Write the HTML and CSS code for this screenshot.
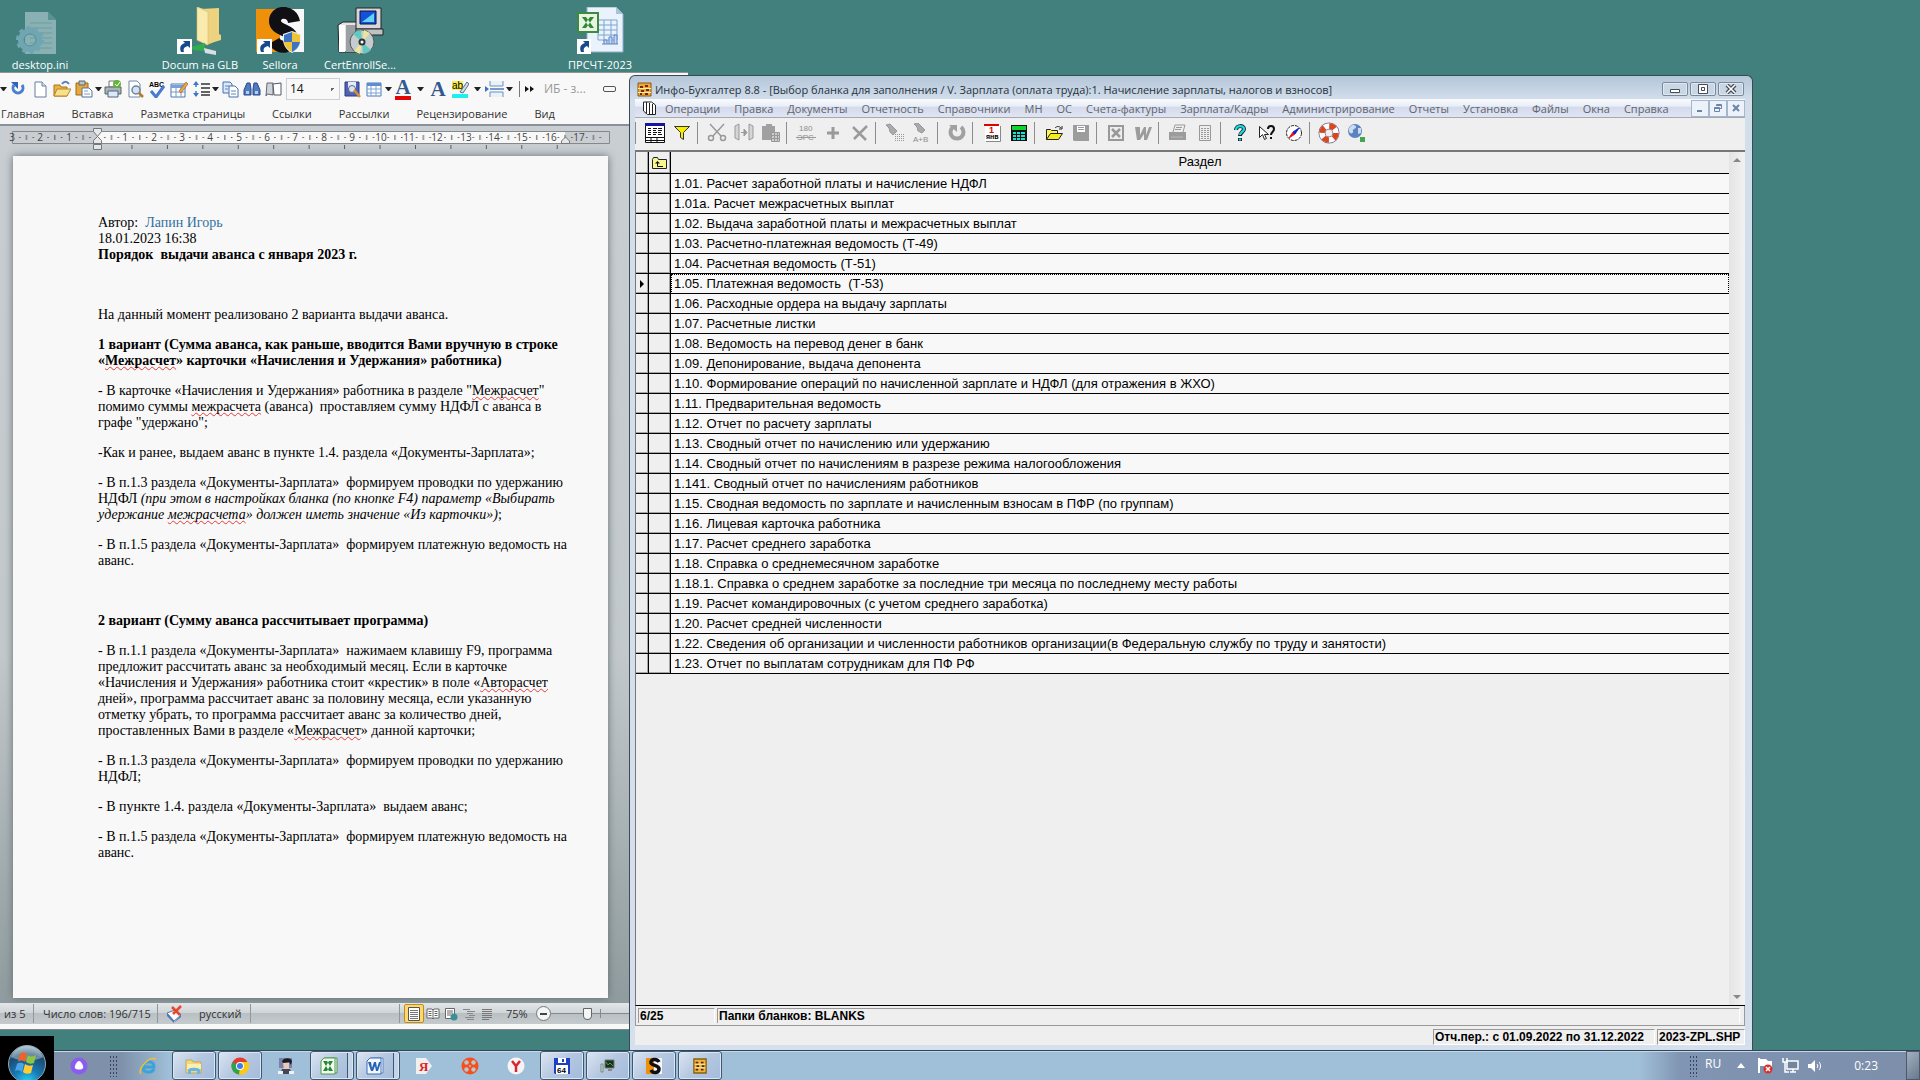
FILE: index.html
```html
<!DOCTYPE html>
<html lang="ru">
<head>
    <meta charset="UTF-8">
    <meta name="viewport" content="width=device-width, initial-scale=1.0">
    <title>Инфо-Бухгалтер 8.8</title>
    <link rel="stylesheet" href="styles.css">
</head>
<body>
    <main class="desktop">
        <!-- Desktop shortcuts -->
        <div class="shortcuts">
            <a class="shortcut col-1" href="#">
                <svg width="48" height="48" viewBox="0 0 48 48"><g opacity=".6"><path d="M9 5h23l8 8v34H9z" fill="#b9d0d6"/><path d="M32 5v8h8z" fill="#6d9da0"/><path d="M14 16h22M14 21h22M14 26h22M14 31h22M14 36h22M14 41h22" stroke="#8fb2b8"/><circle cx="14" cy="33" r="9" fill="none" stroke="#8fc0d4" stroke-width="6"/><circle cx="14" cy="33" r="12" fill="none" stroke="#8fc0d4" stroke-width="4" stroke-dasharray="4 3.5"/><circle cx="14" cy="33" r="6" fill="none" stroke="#5c98a8"/></g></svg>
                <span>desktop.ini</span>
            </a>
            <a class="shortcut col-3" href="#">
                <svg width="48" height="48" viewBox="0 0 48 48"><path d="M21 0l10 3v35l-10-5z" fill="#f5e39a"/><path d="M31 5l12-3v31l-12 5z" fill="#e5c669"/><path d="M25 2l18-1v26l2 1v5l-14 4V6z" fill="#edd280"/><path d="M21 0l11 5v33l-11-5z" fill="#f9ebae" stroke="#d9bd67" stroke-width=".6"/><path d="M15 40l14-4v8l-12-1z" fill="#2fae4d"/><path d="M28 41l12 3v4l-11-2z" fill="#d8e0e2"/><path d="M1 32h15v15H1z" fill="#fff"/><path d="M5 45c-2-5 0-8 4-9l-2-2h7v7l-2-2c-4 1-5 3-4 6z" fill="#164a8c"/></svg>
                <span>Docum на GLB</span>
            </a>
            <a class="shortcut col-4" href="#">
                <svg width="48" height="48" viewBox="0 0 48 48"><path d="M0 2h26v43H0z" fill="#ee9009"/><path d="M24 2h24v43H24z" fill="#f7f7f7"/><path d="M38 15c-2-12-19-12-19-1 0 10 17 8 17 18 0 9-13 11-18 2" fill="none" stroke="#101014" stroke-width="12"/><path d="M27 27l9-3 9 3c1 11-3 16-9 19-6-3-10-8-9-19z" fill="#e9eff5"/><path d="M36 25l-8 3v7h8zM36 35h8c-1 5-4 8-8 10z" fill="#3d73c3"/><path d="M36 25l8 3v7h-8zM36 35h-8c1 5 4 8 8 10z" fill="#f1c437"/><path d="M1 32h15v15H1z" fill="#fff"/><path d="M5 45c-2-5 0-8 4-9l-2-2h7v7l-2-2c-4 1-5 3-4 6z" fill="#164a8c"/></svg>
                <span>Sellora</span>
            </a>
            <a class="shortcut col-5" href="#">
                <svg width="48" height="48" viewBox="0 0 48 48"><path d="M2 18l5-3h14v30H3z" fill="#e4e4e4" stroke="#222"/><path d="M3 18h6v27H3z" fill="#fff"/><path d="M10 18h11v27H10z" fill="#9aa0a4"/><path d="M20 1h25v21H20z" fill="#d5d7da" stroke="#222"/><path d="M24 4h16v13H24z" fill="#1551d8" stroke="#113" /><path d="M26 15L38 6v9z" fill="#5fd4f5"/><path d="M20 22h27v6H20z" fill="#bfc2c5" stroke="#222"/><circle cx="26" cy="35" r="12" fill="#c5cccf" stroke="#555"/><path d="M26 35L17 27a12 12 0 0 1 8-4zM26 35l9 8a12 12 0 0 1-8 4z" fill="#61c9c0"/><path d="M26 35l2-12 6 3zM26 35l-2 12-6-3z" fill="#e9e69c"/><circle cx="26" cy="35" r="3.5" fill="#333"/><circle cx="26" cy="35" r="1.5" fill="#fff"/></svg>
                <span>CertEnrollSe...</span>
            </a>
            <a class="shortcut col-8" href="#">
                <svg width="48" height="48" viewBox="0 0 48 48"><path d="M11 0h29l7 7v38H11z" fill="#eaf3fc" stroke="#8daecb"/><path d="M40 0v7h7z" fill="#a8c4dd"/><path d="M22 13h19M22 18h19M22 23h19M22 28h19M22 33h19M22 13v20M28 13v22M35 13v20M41 13v20" stroke="#7da4d1"/><path d="M26 37h16M28 37v-4h3v4M33 37v-7h3v7M38 37v-9h3v9" stroke="#5b83c5" fill="#c6d8f0"/><path d="M2 6h20v19H2z" fill="#e8f3e4" stroke="#3d8b43" stroke-width="2"/><path d="M6 10h4l8 11h-4zM18 10h-4L6 21h4z" fill="#2f8a36"/><path d="M1 32h14v15H1z" fill="#fff"/><path d="M5 45c-2-5 0-8 4-9l-2-2h6v7l-2-2c-3 1-4 3-3 6z" fill="#164a8c"/></svg>
                <span>ПРСЧТ-2023</span>
            </a>
        </div>

        <!-- Text editor window -->
        <section class="word">
            <div class="word-tools">
                <i class="caret"></i>
                <button class="tool" aria-label="Отменить"><svg width="18" height="18" viewBox="0 0 18 18"><path d="M5 5a5 5 0 1 0 8 0" fill="none" stroke="#4a80cf" stroke-width="3"/><path d="M2 2h7v7z" fill="#2f62b8"/></svg></button>
                <button class="tool" aria-label="Создать"><svg width="18" height="18" viewBox="0 0 18 18"><path d="M4 2h7l4 4v11H4z" fill="#fff" stroke="#667da0"/><path d="M11 2v4h4" fill="#dce6f4" stroke="#667da0"/></svg></button>
                <button class="tool" aria-label="Открыть"><svg width="18" height="18" viewBox="0 0 18 18"><path d="M1 5h6l1 2h6v9H1z" fill="#e9b54a" stroke="#a67417"/><path d="M4 9h14l-4 7H1z" fill="#fbe08c" stroke="#b3862a"/><path d="M9 4c2-3 5-3 7 0" fill="none" stroke="#5d83b8" stroke-width="2"/></svg></button>
                <button class="tool" aria-label="Вставить"><svg width="18" height="18" viewBox="0 0 18 18"><path d="M1 3h12v12H1z" fill="#e8a93a" stroke="#9b6a18"/><path d="M4 1h6v4H4z" fill="#b9c2cd" stroke="#666"/><path d="M7 8h7l3 3v6H7z" fill="#fff" stroke="#51719d"/><path d="M9 11h4M9 14h6" stroke="#7f9bc5"/></svg></button>
                <i class="caret"></i>
                <button class="tool" aria-label="Печать"><svg width="18" height="18" viewBox="0 0 18 18"><path d="M5 1h8v6H5z" fill="#fff" stroke="#777"/><path d="M1 7h16v7H1z" fill="#aab4bd" stroke="#566"/><path d="M4 11h10v6H4z" fill="#dbeafa" stroke="#567"/><circle cx="13" cy="4" r="4" fill="#65b33d"/><path d="M11 4l2 2 3-4" stroke="#fff" fill="none"/></svg></button>
                <button class="tool" aria-label="Просмотр"><svg width="18" height="18" viewBox="0 0 18 18"><path d="M3 1h8l3 3v13H3z" fill="#fff" stroke="#7186a6"/><circle cx="10" cy="10" r="4" fill="#cfe5f7" stroke="#708196" stroke-width="1.5"/><path d="M13 13l4 4" stroke="#b67a2a" stroke-width="2.5"/></svg></button>
                <button class="tool" aria-label="Правописание"><svg width="22" height="18" viewBox="0 0 22 18"><text x="3" y="7" class="tiny-text">ABC</text><path d="M5 11l5 6 8-11" fill="none" stroke="#477ad0" stroke-width="3"/></svg></button>
                <button class="tool" aria-label="Нарисовать таблицу"><svg width="18" height="18" viewBox="0 0 18 18"><path d="M1 4h14v13H1z" fill="#fff" stroke="#4f78b4"/><path d="M1 5h14v3H1z" fill="#79a0d8"/><path d="M1 12h14M6 8v9M11 8v9" stroke="#7799c8"/><path d="M9 11L16 2l2 2-7 9z" fill="#eaa44b" stroke="#8d5520" stroke-width=".6"/></svg></button>
                <button class="tool" aria-label="Интервал"><svg width="18" height="18" viewBox="0 0 18 18"><path d="M4 2v5M4 11v5" stroke="#3d78c9"  stroke-width="1.5"/><path d="M1 5l3-4 3 4zM1 13l3 4 3-4z" fill="#3d78c9"/><path d="M9 4h9M9 8h9M9 12h9M9 15h9" stroke="#333" stroke-width="1.5"/></svg></button>
                <i class="caret"></i>
                <button class="tool" aria-label="Копировать"><svg width="18" height="18" viewBox="0 0 18 18"><path d="M2 2h7l2 2v9H2z" fill="#dce9fa" stroke="#4770ae"/><path d="M8 6h6l3 3v8H8z" fill="#fff" stroke="#4770ae"/><path d="M4 6h4M4 9h3M10 11h5M10 14h5" stroke="#5a86c8"/></svg></button>
                <button class="tool" aria-label="Найти"><svg width="18" height="18" viewBox="0 0 18 18"><path d="M4 3h3l1 6v6H1v-5zM14 3h-3l-1 6v6h7v-5z" fill="#4f7bc2" stroke="#27498a"/><path d="M3 11h3v3H3zM12 11h3v3h-3z" fill="#b5cdf0"/></svg></button>
                <button class="tool" aria-label="Чтение"><svg width="18" height="18" viewBox="0 0 18 18"><path d="M2 3h6v12l-6-1-1 2z" fill="#cfd4da" stroke="#667"/><path d="M8 4l8-1v12H9z" fill="#fff" stroke="#556"/></svg></button>
                <select class="size-box" aria-label="Размер шрифта"><option>14</option></select>
                <button class="tool" aria-label="Сохранить как"><svg width="18" height="18" viewBox="0 0 18 18"><path d="M2 2h14v14H2z" fill="#4f62b7" stroke="#2d3a80"/><path d="M5 2h8v6H5z" fill="#e4ebfa"/><circle cx="9" cy="9" r="3.5" fill="#d8e4f4" stroke="#667"/><path d="M11 10l6 7" stroke="#d59136" stroke-width="2.5"/></svg></button>
                <button class="tool" aria-label="Таблица"><svg width="18" height="18" viewBox="0 0 18 18"><path d="M2 3h14v13H2z" fill="#fff" stroke="#4f78b4"/><path d="M2 3h14v3H2z" fill="#5f8dd3"/><path d="M2 9h14M2 13h14M6 6v10M11 6v10" stroke="#7fa3d6"/></svg></button>
                <i class="caret"></i>
                <button class="tool letter red-line" aria-label="Цвет текста">A</button>
                <i class="caret wide"></i>
                <button class="tool letter" aria-label="Стиль">A</button>
                <button class="tool" aria-label="Выделение"><svg width="18" height="20" viewBox="0 0 18 20"><path d="M1 2h11v9H1z" fill="#f7ee4b"/><text x="1" y="10" class="ab-text">ab</text><path d="M9 13l7-10 2 2-6 9z" fill="#d3dce8" stroke="#5a708f"/><path d="M1 15h16v4H1z" fill="#21eef0"/></svg></button>
                <i class="caret wide"></i>
                <button class="tool" aria-label="Разрыв"><svg width="20" height="18" viewBox="0 0 20 18"><path d="M5 1v5h13V1M5 17v-5h13v5" fill="#e9f1fb" stroke="#6f8fb9"/><path d="M5 9h14" stroke="#4b7dc4" stroke-width="1.5"/><path d="M0 6l4 3-4 3z" fill="#3970c2"/></svg></button>
                <i class="caret"></i>
                <i class="tool-line"></i>
                <button class="tool more" aria-label="Ещё"><svg width="10" height="8" viewBox="0 0 10 8"><path d="M1 1l4 3-4 3zM6 1l4 3-4 3z" fill="#111"/></svg></button>
                <span class="doc-name">ИБ - з...</span>
                <button class="tool word-min" aria-label="Свернуть"><i></i></button>
            </div>
            <nav class="word-tabs">
                <button>Главная</button><button>Вставка</button><button>Разметка страницы</button><button>Ссылки</button><button>Рассылки</button><button>Рецензирование</button><button>Вид</button>
            </nav>
            <div class="word-body">
                <svg class="ruler" width="612" height="28" viewBox="0 0 612 28">
                    <defs>
                        <pattern id="cm" x="97" y="0" width="28.35" height="28" patternUnits="userSpaceOnUse"><path d="M7 11.500h1.500M20.500 11.500H22" stroke="#555"/><path d="M14.500 9v5" stroke="#555"/></pattern>
                        <pattern id="tabs" x="97" y="0" width="35.44" height="28" patternUnits="userSpaceOnUse"><path d="M35 19v4" stroke="#555"/></pattern>
                    </defs>
                    <path d="M12.500 5.500h597v12h-597z" fill="#c9ced2" stroke="#85898c"/>
                    <path d="M97 6h468v11H97z" fill="#f8f8f8"/>
                    <path d="M13 6h595v11H13z" fill="url(#cm)"/>
                    <path d="M98 18h462v6H98z" fill="url(#tabs)"/>
                    <g class="ruler-nums">
                        <text x="12" y="15">3</text><text x="40" y="15">2</text><text x="69" y="15">1</text>
                        <text x="125" y="15">1</text><text x="154" y="15">2</text><text x="182" y="15">3</text><text x="210" y="15">4</text><text x="239" y="15">5</text><text x="267" y="15">6</text><text x="295" y="15">7</text><text x="324" y="15">8</text><text x="352" y="15">9</text><text x="381" y="15">10</text><text x="409" y="15">11</text><text x="437" y="15">12</text><text x="466" y="15">13</text><text x="494" y="15">14</text><text x="522" y="15">15</text><text x="551" y="15">16</text><text x="579" y="15">17</text>
                    </g>
                    <path d="M93.500 2.500h8v3l-4 5 4 4v3h-8v-3l4-4-4-5zM93.500 18.500h8v5h-8z" fill="#e6e8ea" stroke="#777"/>
                    <path d="M565.500 11l4 4v2.500h-8V15z" fill="#e6e8ea" stroke="#777"/>
                </svg>
                <article class="page">
                    <p>Автор:&nbsp; <a href="#">Лапин Игорь</a><br>18.01.2023 16:38<br><b>Порядок&nbsp; выдачи аванса с января 2023 г.</b></p>
                    <p>&nbsp;</p>
                    <p>На данный момент реализовано 2 варианта выдачи аванса.</p>
                    <p><b>1 вариант (Сумма аванса, как раньше, вводится Вами вручную в строке<br>«<u>Межрасчет</u>» карточки «Начисления и Удержания» работника)</b></p>
                    <p>- В карточке «Начисления и Удержания» работника в разделе "<u>Межрасчет</u>"<br>помимо суммы <u>межрасчета</u> (аванса)&nbsp; проставляем сумму НДФЛ с аванса в<br>графе "удержано";</p>
                    <p>-Как и ранее, выдаем аванс в пункте 1.4. раздела «Документы-Зарплата»;</p>
                    <p>- В п.1.3 раздела «Документы-Зарплата»&nbsp; формируем проводки по удержанию<br>НДФЛ <em>(при этом в настройках бланка (по кнопке F4) параметр «Выбирать<br>удержание <u>межрасчета</u>» должен иметь значение «Из карточки»)</em>;</p>
                    <p>- В п.1.5 раздела «Документы-Зарплата»&nbsp; формируем платежную ведомость на<br>аванс.</p>
                    <p>&nbsp;</p>
                    <p><b>2 вариант (Сумму аванса рассчитывает программа)</b></p>
                    <p>- В п.1.1 раздела «Документы-Зарплата»&nbsp; нажимаем клавишу F9, программа<br>предложит рассчитать аванс за необходимый месяц. Если в карточке<br>«Начисления и Удержания» работника стоит «крестик» в поле «<u>Авторасчет</u><br>дней», программа рассчитает аванс за половину месяца, если указанную<br>отметку убрать, то программа рассчитает аванс за количество дней,<br>проставленных Вами в разделе «<u>Межрасчет</u>» данной карточки;</p>
                    <p>- В п.1.3 раздела «Документы-Зарплата»&nbsp; формируем проводки по удержанию<br>НДФЛ;</p>
                    <p>- В пункте 1.4. раздела «Документы-Зарплата»&nbsp; выдаем аванс;</p>
                    <p>- В п.1.5 раздела «Документы-Зарплата»&nbsp; формируем платежную ведомость на<br>аванс.</p>
                </article>
            </div>
            <footer class="word-status">
                <span class="st-pages">из 5</span>
                <span class="st-words">Число слов: 196/715</span>
                <span class="st-lang"><svg width="18" height="18" viewBox="0 0 18 18"><path d="M2 8l8-3 6 5-7 6z" fill="#fff" stroke="#4e78b5"/><path d="M2 8v3l7 7v-2zM9 18l7-6v-2" fill="#4e78b5"/><path d="M7 2l8 8M16 1L8 9" stroke="#e8472b" stroke-width="2.500"/></svg>русский</span>
                <span class="st-views">
                    <button class="active" aria-label="Разметка страницы"><svg width="14" height="14" viewBox="0 0 14 14"><path d="M1.500.5h11v13h-11z" fill="#fff" stroke="#555"/><path d="M3 3.500h8M3 5.500h8M3 7.500h8M3 9.500h8M3 11.500h8" stroke="#777"/></svg></button>
                    <button aria-label="Чтение"><svg width="14" height="14" viewBox="0 0 14 14"><path d="M1 2h5l1 1 1-1h5v9H8l-1 1-1-1H1zM7 3v9M2.500 4.500h3M2.500 6.500h3M2.500 8.500h3M8.500 4.500h3M8.500 6.500h3M8.500 8.500h3" fill="#fff" stroke="#666"/></svg></button>
                    <button aria-label="Веб-документ"><svg width="14" height="14" viewBox="0 0 14 14"><path d="M1.500 1.500h9v10h-9zM3 4h6M3 6h6M3 8h4" fill="#fff" stroke="#666"/><circle cx="10" cy="10" r="3.500" fill="#3c8f95"/></svg></button>
                    <button aria-label="Структура"><svg width="14" height="14" viewBox="0 0 14 14"><path d="M1 2.500h7M5 4.500h8M5 6.500h6M7 8.500h6M3 10.500h9M5 12.500h7" stroke="#888"/></svg></button>
                    <button aria-label="Черновик"><svg width="14" height="14" viewBox="0 0 14 14"><path d="M2 2.500h10M2 4.500h10M2 6.500h10M2 8.500h10M2 10.500h10M2 12.500h7" stroke="#777"/></svg></button>
                </span>
                <span class="st-zoom">75%</span>
                <button class="zoom-out" aria-label="Уменьшить"></button>
                <input class="zoom" type="range" min="0" max="100" value="36" aria-label="Масштаб">
            </footer>
        </section>

        <!-- Accounting window -->
        <section class="app">
            <header class="app-title">
                <svg width="15" height="15" viewBox="0 0 15 15"><path d="M1 1h13v13H1z" fill="#f0a83a" stroke="#8a5716"/><path d="M3 4h3v2H3zM8 3h3v2H8zM4 8h3v2H4zM9 7h3v2H9zM3 11h2v2H3zM8 11h3v2H8z" fill="#742a12"/><path d="M1 6.500h13M1 10.500h13" stroke="#fff2a0"/></svg>
                <h1>Инфо-Бухгалтер 8.8 - [Выбор бланка для заполнения / V. Зарплата (оплата труда):1. Начисление зарплаты, налогов и взносов]</h1>
                <button aria-label="Свернуть"><svg width="12" height="10" viewBox="0 0 12 10"><path d="M1.500 5.500h9v3h-9z" fill="#fff" stroke="#444b55"/></svg></button>
                <button aria-label="Развернуть"><svg width="12" height="10" viewBox="0 0 12 10"><path d="M1.500.5h9v9h-9zM4.500 3.500h3v3h-3z" fill="#fff" stroke="#444b55"/></svg></button>
                <button aria-label="Закрыть"><svg width="12" height="10" viewBox="0 0 12 10"><path d="M2 1l8 8M10 1L2 9" stroke="#444b55" stroke-width="4"/><path d="M2 1l8 8M10 1L2 9" stroke="#fff" stroke-width="1.600"/></svg></button>
            </header>
            <nav class="app-menu">
                <svg width="13" height="14" viewBox="0 0 13 14"><path d="M.5 1h8l4 3v9.500h-8L.5 10z" fill="#fff" stroke="#222"/><path d="M3.500 1v11M6.500 2v11M9.500 3v10" stroke="#222"/></svg>
                <button>Операции</button><button>Правка</button><button>Документы</button><button>Отчетность</button><button>Справочники</button><button>МН</button><button>ОС</button><button>Счета-фактуры</button><button>Зарплата/Кадры</button><button>Администрирование</button><button>Отчеты</button><button>Установка</button><button>Файлы</button><button>Окна</button><button>Справка</button>
                <span class="mdi">
                    <button aria-label="Свернуть окно"><svg width="10" height="10" viewBox="0 0 10 10"><path d="M2 8h5" stroke="#6a84a8" stroke-width="2"/></svg></button>
                    <button aria-label="Восстановить окно"><svg width="10" height="10" viewBox="0 0 10 10"><path d="M3.500 3V1.500h5v4H7M1.500 4.500h5v4h-5zM1.500 5.500h5M3.500 2.500h5" fill="none" stroke="#6a84a8"/></svg></button>
                    <button aria-label="Закрыть окно"><svg width="10" height="10" viewBox="0 0 10 10"><path d="M2 2l6 6M8 2L2 8" stroke="#6a84a8" stroke-width="2"/></svg></button>
                </span>
            </nav>
            <div class="app-tools">
                <i></i>
                <button aria-label="Бланк"><svg width="20" height="20" viewBox="0 0 20 20"><path d="M.5.5h19v19H.5z" fill="#fff" stroke="#111"/><path d="M0 0h20v3H0z" fill="#1616a0"/><path d="M3 5.500h3M8 5.500h4M13 5.500h4M3 7.500h3M8 7.500h3M13 7.500h4M3 9.500h3M8 9.500h4M13 9.500h3M3 11.500h3M8 11.500h3M13 11.500h4" stroke="#111"/><path d="M1 14.500h18M1 17.500h18M6 14v5M12 14v5" stroke="#111"/></svg></button>
                <button aria-label="Фильтр"><svg width="18" height="16" viewBox="0 0 18 16"><path d="M1.500 1.500h15l-6 6v7l-3-2V7.500z" fill="#f4ee00" stroke="#333"/></svg></button>
                <i></i>
                <button aria-label="Вырезать"><svg width="20" height="20" viewBox="0 0 20 20"><path d="M3 1l11 12M17 1L6 13" stroke="#999" stroke-width="1.500"/><circle cx="4" cy="15" r="2.500" fill="none" stroke="#999" stroke-width="1.500"/><circle cx="16" cy="15" r="2.500" fill="none" stroke="#999" stroke-width="1.500"/></svg></button>
                <button aria-label="Копировать"><svg width="20" height="20" viewBox="0 0 20 20"><path d="M1 3l4-2v16l-4-2zM19 3l-4-2v16l4-2z" fill="#d5d5d5" stroke="#999"/><path d="M7 9.500h5M10 6l3 3.500-3 3.500z" stroke="#999" fill="#999"/></svg></button>
                <button aria-label="Вставить"><svg width="20" height="20" viewBox="0 0 20 20"><path d="M1 3h4V1h6v2h3v14H1z" fill="#a0a0a0"/><path d="M10.500 9.500h8v9h-8zM10 12.500h8M10 15.500h8M13.500 9v9M16.500 9v9" fill="#ccc" stroke="#999"/></svg></button>
                <i></i>
                <button aria-label="Номер"><svg width="20" height="20" viewBox="0 0 20 20"><text x="3" y="8" class="gray-text">180</text><text x="1" y="17" class="gray-text">ЭРС</text><path d="M0 14.500h20" stroke="#999"/></svg></button>
                <button aria-label="Добавить"><svg width="20" height="20" viewBox="0 0 20 20"><path d="M10 4v12M4 10h12" stroke="#9a9a9a" stroke-width="3"/></svg></button>
                <button aria-label="Удалить"><svg width="20" height="20" viewBox="0 0 20 20"><path d="M3 4l13 13M17 3L4 16" stroke="#9a9a9a" stroke-width="2.500"/></svg></button>
                <i></i>
                <button aria-label="Поиск"><svg width="20" height="20" viewBox="0 0 20 20"><path d="M1 2l4-1 7 7-4 4-3-3-1-4z" fill="#aaa" stroke="#999"/><path d="M10 11.500h9M10 13.500h9M10 15.500h9M10 17.500h9" stroke="#999" stroke-dasharray="1 1"/></svg></button>
                <button aria-label="Замена"><svg width="20" height="20" viewBox="0 0 20 20"><path d="M2 1l4-1 7 7-3 3-4-2-1-4z" fill="#aaa" stroke="#999"/><text x="1" y="19" class="gray-text">A+B</text></svg></button>
                <i></i>
                <button aria-label="Обновить"><svg width="20" height="20" viewBox="0 0 20 20"><path d="M6 4a6.500 6.500 0 1 0 8 0" fill="none" stroke="#a0a0a0" stroke-width="4"/><path d="M2 2h8v7z" fill="#a0a0a0"/></svg></button>
                <i></i>
                <button aria-label="Календарь"><svg width="18" height="20" viewBox="0 0 18 20"><path d="M2 2h15v16H2z" fill="#fff"/><path d="M1 1h15v2H1z" fill="#e00000"/><path d="M17.500 3v15.500H3" fill="none" stroke="#888"/><text x="6" y="10" class="cal-day">1</text><text x="3" y="16" class="cal-month">янв</text></svg></button>
                <button aria-label="Калькулятор"><svg width="18" height="18" viewBox="0 0 18 18"><path d="M1 1h16v16H1z" fill="#111"/><path d="M2 2h14v4H2z" fill="#0ed42c"/><path d="M3 8h3v2H3zM7 8h3v2H7zM11 8h4v2h-4zM3 11h3v2H3zM7 11h3v2H7zM11 11h4v2h-4zM3 14h3v2H3zM7 14h3v2H7zM11 14h4v2h-4z" fill="#20e0d0"/></svg></button>
                <i></i>
                <button aria-label="Открыть"><svg width="18" height="16" viewBox="0 0 18 16"><path d="M1.500 14.500v-10h4l1 1h6v3" fill="#fbf65a" stroke="#222"/><path d="M1.500 14.500l4-6h12l-4 6z" fill="#f4ee20" stroke="#222"/><path d="M10 3c2-2 4-2 6 0M17 1v3h-3" fill="none" stroke="#222"/></svg></button>
                <button aria-label="Сохранить"><svg width="16" height="16" viewBox="0 0 16 16"><path d="M0 0h16v16H1l-1-1z" fill="#9c9c9c"/><path d="M4 1h8v6H4z" fill="#fff"/><path d="M5 2.500h6M5 4.500h6" stroke="#999"/></svg></button>
                <i></i>
                <button aria-label="Excel"><svg width="18" height="18" viewBox="0 0 18 18"><path d="M2 2h14v14H2z" fill="#eee" stroke="#999" stroke-width="2"/><path d="M5 5l8 8M13 5l-8 8" stroke="#999" stroke-width="2.500"/></svg></button>
                <button aria-label="Word"><svg width="18" height="16" viewBox="0 0 18 16"><path d="M1 2h5v8l4-8h2v8l3-8h3l-5 13h-3V9l-4 6H3z" fill="#9c9c9c"/></svg></button>
                <i></i>
                <button aria-label="Печать"><svg width="20" height="18" viewBox="0 0 20 18"><path d="M5 8l2-7h10l-2 7" fill="#eee" stroke="#999"/><path d="M8 3.500h6M7 5.500h6" stroke="#999"/><path d="M1 8h17v8H1z" fill="#9c9c9c"/><path d="M3 13h12" stroke="#bbb"/></svg></button>
                <button aria-label="Документ"><svg width="16" height="18" viewBox="0 0 16 18"><path d="M2.500 1.500h11v15h-11z" fill="#eee" stroke="#999"/><path d="M4 4.500h8M4 6.500h8M4 8.500h8M4 10.500h8M4 12.500h8M4 14.500h8" stroke="#999" stroke-dasharray="2 1"/></svg></button>
                <i></i>
                <button aria-label="Помощь"><svg width="16" height="18" viewBox="0 0 16 18"><path d="M4 6c0-5 8-5 8-1 0 3-4 3-4 7M8 14v3" fill="none" stroke="#222" stroke-width="4"/><path d="M4 6c0-5 8-5 8-1 0 3-4 3-4 6M8 14.500v2" fill="none" stroke="#17d9e4" stroke-width="2.200"/></svg></button>
                <button aria-label="Что это"><svg width="20" height="18" viewBox="0 0 20 18"><path d="M2.500 2.500v11l3-3 2 5 2-1-2-4h4z" fill="#fff" stroke="#222"/><path d="M11 5c0-4 6-4 6 0 0 3-3 3-3 6M14 13v2" fill="none" stroke="#111" stroke-width="2"/></svg></button>
                <button aria-label="Навигатор"><svg width="18" height="18" viewBox="0 0 18 18"><circle cx="9" cy="9" r="7.500" fill="#fff" stroke="#222" stroke-dasharray="3 1"/><path d="M8 8l2 2-6 4z" fill="#e11" stroke="#e11"/><path d="M8 8l2 2 4-6z" fill="#12c" stroke="#12c"/></svg></button>
                <i></i>
                <button aria-label="Поддержка"><svg width="22" height="22" viewBox="0 0 22 22"><circle cx="11" cy="11" r="7" fill="none" stroke="#6b6b94" stroke-width="7"/><circle cx="11" cy="11" r="7" fill="none" stroke="#fff" stroke-width="5.500"/><circle cx="11" cy="11" r="7" fill="none" stroke="#d9481c" stroke-width="5.500" stroke-dasharray="6 5"/></svg></button>
                <button aria-label="Интернет"><svg width="20" height="20" viewBox="0 0 20 20"><circle cx="9" cy="8" r="7" fill="#5b83c0"/><path d="M4 4c2-3 6-2 6 0s-4 2-3 4-2 3-3 2-2-4 0-6zM12 5h3v5l-3 1z" fill="#cfdcee"/><path d="M14 14h5v5h-5z" fill="#44a54c"/></svg></button>
            </div>
            <div class="grid">
                <div class="grid-main">
                    <table>
                        <thead>
                            <tr><th class="mark"></th><th class="pick"><svg width="15" height="12" viewBox="0 0 15 12"><path d="M.5 11.500v-9l1-2h4l1 2h8v9z" fill="#faf690" stroke="#222"/><path d="M3 6.500L5.500 4 8 6.500z" fill="#111"/><path d="M5.500 6v3.500H11" fill="none" stroke="#111"/></svg></th><th>Раздел</th></tr>
                        </thead>
                        <tbody>
                            <tr><td class="mark"></td><td class="pick"></td><td>1.01. Расчет заработной платы и начисление НДФЛ</td></tr>
                            <tr><td class="mark"></td><td class="pick"></td><td>1.01а. Расчет межрасчетных выплат</td></tr>
                            <tr><td class="mark"></td><td class="pick"></td><td>1.02. Выдача заработной платы и межрасчетных выплат</td></tr>
                            <tr><td class="mark"></td><td class="pick"></td><td>1.03. Расчетно-платежная ведомость (Т-49)</td></tr>
                            <tr><td class="mark"></td><td class="pick"></td><td>1.04. Расчетная ведомость (Т-51)</td></tr>
                            <tr class="current"><td class="mark"><i></i></td><td class="pick"></td><td>1.05. Платежная ведомость&nbsp; (Т-53)</td></tr>
                            <tr><td class="mark"></td><td class="pick"></td><td>1.06. Расходные ордера на выдачу зарплаты</td></tr>
                            <tr><td class="mark"></td><td class="pick"></td><td>1.07. Расчетные листки</td></tr>
                            <tr><td class="mark"></td><td class="pick"></td><td>1.08. Ведомость на перевод денег в банк</td></tr>
                            <tr><td class="mark"></td><td class="pick"></td><td>1.09. Депонирование, выдача депонента</td></tr>
                            <tr><td class="mark"></td><td class="pick"></td><td>1.10. Формирование операций по начисленной зарплате и НДФЛ (для отражения в ЖХО)</td></tr>
                            <tr><td class="mark"></td><td class="pick"></td><td>1.11. Предварительная ведомость</td></tr>
                            <tr><td class="mark"></td><td class="pick"></td><td>1.12. Отчет по расчету зарплаты</td></tr>
                            <tr><td class="mark"></td><td class="pick"></td><td>1.13. Сводный отчет по начислению или удержанию</td></tr>
                            <tr><td class="mark"></td><td class="pick"></td><td>1.14. Сводный отчет по начислениям в разрезе режима налогообложения</td></tr>
                            <tr><td class="mark"></td><td class="pick"></td><td>1.141. Сводный отчет по начислениям работников</td></tr>
                            <tr><td class="mark"></td><td class="pick"></td><td>1.15. Сводная ведомость по зарплате и начисленным взносам в ПФР (по группам)</td></tr>
                            <tr><td class="mark"></td><td class="pick"></td><td>1.16. Лицевая карточка работника</td></tr>
                            <tr><td class="mark"></td><td class="pick"></td><td>1.17. Расчет среднего заработка</td></tr>
                            <tr><td class="mark"></td><td class="pick"></td><td>1.18. Справка о среднемесячном заработке</td></tr>
                            <tr><td class="mark"></td><td class="pick"></td><td>1.18.1. Справка о среднем заработке за последние три месяца по последнему месту работы</td></tr>
                            <tr><td class="mark"></td><td class="pick"></td><td>1.19. Расчет командировочных (с учетом среднего заработка)</td></tr>
                            <tr><td class="mark"></td><td class="pick"></td><td>1.20. Расчет средней численности</td></tr>
                            <tr><td class="mark"></td><td class="pick"></td><td>1.22. Сведения об организации и численности работников организации(в Федеральную службу по труду и занятости)</td></tr>
                            <tr><td class="mark"></td><td class="pick"></td><td>1.23. Отчет по выплатам сотрудникам для ПФ РФ</td></tr>
                        </tbody>
                    </table>
                </div>
                <div class="scroll"><i class="up"></i><i class="down"></i></div>
            </div>
            <div class="grid-status"><span class="count">6/25</span><span class="folder">Папки бланков: BLANKS</span></div>
            <footer class="app-status"><span class="period">Отч.пер.: с 01.09.2022 по 31.12.2022</span><span class="base">2023-ZPL.SHP</span></footer>
        </section>
    </main>

    <!-- Taskbar -->
    <footer class="taskbar">
        <button class="start" aria-label="Пуск">
            <svg width="54" height="44" viewBox="0 0 54 44"><defs><radialGradient id="orb" cx=".5" cy="1" r=".95"><stop offset="0" stop-color="#25d8ff"/><stop offset=".4" stop-color="#1879b4"/><stop offset=".8" stop-color="#1c4a70"/><stop offset="1" stop-color="#7ea1b5"/></radialGradient></defs><circle cx="27" cy="28" r="18.500" fill="url(#orb)" stroke="#8fa8b5"/><path d="M11 21a17 17 0 0 1 32 0c-9 5-22 5-32 0z" fill="#fff" opacity=".35"/><path d="M20 18c3-2 5-2 7 0l-2 8c-2-2-5-2-7 0z" fill="#ee6428"/><path d="M28 19c2 2 5 2 8 0l-2 8c-3 1-5 1-8-1z" fill="#8fc63f"/><path d="M17 28c3-2 5-1 7 0l-2 8c-2-2-5-2-7-1z" fill="#4aa5e8"/><path d="M25 28c3 2 5 2 8 1l-2 8c-3 1-6 1-8-1z" fill="#ffcd32"/></svg>
        </button>
        <div class="quick">
            <svg width="18" height="18" viewBox="0 0 18 18"><circle cx="9" cy="9" r="8.500" fill="#8a5cf0"/><path d="M9 4c2 0 5 5 4 7s-7 2-8 0 2-7 4-7z" fill="#fff"/></svg>
            <i class="grip"></i>
        </div>
        <div class="tasks">
            <button aria-label="Internet Explorer"><svg width="18" height="18" viewBox="0 0 18 18"><path d="M4 10h11c1-7-11-7-11 0s9 6 11 2" fill="none" stroke="#38a4de" stroke-width="3"/><path d="M2 17C-2 13 9-1 17 2" fill="none" stroke="#f2bf2e" stroke-width="1.500"/></svg></button>
            <button class="open" aria-label="Проводник"><svg width="18" height="18" viewBox="0 0 18 18"><path d="M1 3h6l1 2h8v11H1z" fill="#f3d878" stroke="#bf9a3c" stroke-width=".7"/><path d="M2 7h14v5H2z" fill="#fcefb2"/><path d="M3 17v-4c0-3 12-3 12 0v4h-3v-3H6v3z" fill="#69b5e4"/></svg></button>
            <button class="open" aria-label="Chrome"><svg width="18" height="18" viewBox="0 0 18 18"><circle cx="9" cy="9" r="8.500" fill="#e33b2e"/><path d="M9 9L1.500 5A8.500 8.500 0 0 0 8 17.500z" fill="#2ea44f"/><path d="M9 9l-1 8.500A8.500 8.500 0 0 0 17 5H9z" fill="#fbc916"/><circle cx="9" cy="9" r="4" fill="#fff"/><circle cx="9" cy="9" r="3" fill="#3b7ded"/></svg></button>
            <button aria-label="Персонаж"><svg width="18" height="18" viewBox="0 0 18 18"><path d="M2 1h13v10H2z" fill="#7b82a8"/><path d="M5 4c3-4 9-3 10 0l-1 4-2-3-6 1z" fill="#1b1b22"/><path d="M6 6h6v7H7z" fill="#e8ccb6"/><path d="M3 17l2-5h8l2 5z" fill="#45465a"/><path d="M1 14h5v3H1zM12 14h5v3h-5z" fill="#f2f2f4"/></svg></button>
            <button class="open many" aria-label="Excel"><svg width="18" height="18" viewBox="0 0 18 18"><path d="M4 1h13v15H4z" fill="#e9f4e6" stroke="#4c9a4d"/><path d="M1 4l3-3h11v16H1z" fill="#f4faf1" stroke="#4c9a4d"/><path d="M3 4h4l6 10H9zM13 4H9L3 14h4z" fill="#248a35"/></svg></button>
            <button class="open many" aria-label="Word"><svg width="18" height="18" viewBox="0 0 18 18"><path d="M5 1h12v15H5z" fill="#fff" stroke="#5d87c4"/><path d="M1 4l3-3h11v16H1z" fill="#f2f7fd" stroke="#3d6fb8"/><path d="M2 5h3l1 6 2-6h2l1 6 2-6h2l-3 9h-2l-1-5-2 5H5z" fill="#2862b3"/></svg></button>
            <button aria-label="Яндекс"><svg width="18" height="18" viewBox="0 0 18 18"><path d="M1 1h10l6 8-6 8H1z" fill="#f2f0ee"/><text x="4" y="14" class="ya-text">Я</text></svg></button>
            <button aria-label="Кино"><svg width="18" height="18" viewBox="0 0 18 18"><circle cx="9" cy="9" r="8.500" fill="#f4501e"/><g fill="#b7c6cf"><circle cx="5.500" cy="5.500" r="2.200"/><circle cx="12.500" cy="5.500" r="2.200"/><circle cx="5.500" cy="12.500" r="2.200"/><circle cx="12.500" cy="12.500" r="2.200"/><circle cx="9" cy="9" r="1"/></g></svg></button>
            <button aria-label="Браузер"><svg width="18" height="18" viewBox="0 0 18 18"><circle cx="9" cy="9" r="8.500" fill="#f6f4f4"/><path d="M5 4l4 5 4-5M9 9v6" fill="none" stroke="#d9262c" stroke-width="2.500"/></svg></button>
            <button class="open" aria-label="Диск"><svg width="18" height="18" viewBox="0 0 18 18"><path d="M1 1h16v16H2l-1-1z" fill="#1d3fc4"/><path d="M5 1h8v5H5z" fill="#fff"/><path d="M9 2h2v3H9z" fill="#1d3fc4"/><path d="M3 8h12v9H3z" fill="#fff"/><text x="4" y="16" class="disk-text">64</text></svg></button>
            <button class="open" aria-label="Терминал"><svg width="18" height="18" viewBox="0 0 18 18"><path d="M6 3h9v8H6z" fill="#16321b" stroke="#777"/><path d="M7 5l2 3 2-2 3 3" stroke="#3fa851" fill="none"/><path d="M9 12h4v2H9z" fill="#888"/><path d="M2 7h2v8H2z" fill="#d6e2c0" stroke="#788"/></svg></button>
            <button class="open" aria-label="Sellora"><svg width="18" height="18" viewBox="0 0 18 18"><path d="M1 1h9v16H1z" fill="#ee9009"/><path d="M9 1h8v16H9z" fill="#f7f7f7"/><path d="M14 5C12 1 5 2 6 6c1 3 8 2 8 6s-6 5-8 1" fill="none" stroke="#101014" stroke-width="3.500"/></svg></button>
            <button class="open" aria-label="Инфо-Бухгалтер"><svg width="14" height="16" viewBox="0 0 16 18"><path d="M1 1h14v16H1z" fill="#f2b33e" stroke="#866012" stroke-width="1.500"/><path d="M3 4h3v2H3zM9 4h3v2H9zM4 8h3v2H4zM10 8h3v2h-3zM3 12h3v2H3zM9 12h3v2H9z" fill="#4a2a12"/><path d="M2 7h12M2 11h12" stroke="#fff5b0"/></svg></button>
        </div>
        <div class="tray">
            <i class="grip"></i>
            <span class="lang">RU</span>
            <svg class="tray-up" width="8" height="5" viewBox="0 0 8 5"><path d="M0 5l4-5 4 5z" fill="#fff"/></svg>
            <svg width="17" height="17" viewBox="0 0 17 17"><path d="M2 1v15" stroke="#fff" stroke-width="2"/><path d="M3 2h6l2 2h4v7H9L7 9H3z" fill="#fff"/><circle cx="11" cy="12" r="4.500" fill="#d9302c"/><path d="M9 10l4 4M13 10l-4 4" stroke="#fff" stroke-width="1.500"/></svg>
            <svg width="17" height="17" viewBox="0 0 17 17"><path d="M5 4h11v8H5zM8 15h6M11 12v3" fill="#7386a0" stroke="#fff" stroke-width="1.500"/><path d="M1 1v4h4V1M3 5v10h4" fill="none" stroke="#fff" stroke-width="1.500"/></svg>
            <svg width="16" height="14" viewBox="0 0 16 14"><path d="M1 5h3l4-4v12L4 9H1z" fill="#fff"/><path d="M10 5c1 1 1 3 0 4M12 3c2 2 2 6 0 8" fill="none" stroke="#fff"/></svg>
            <time>0:23</time>
            <button class="peek" aria-label="Показать рабочий стол"></button>
        </div>
    </footer>
</body>
</html>
```
FILE: styles.css
```css
* {
    box-sizing: border-box;
}
body {
    margin: 0;
    height: 100vh;
    display: flex;
    flex-direction: column;
    overflow: hidden;
    background-color: #42807e;
    font-family: "Open Sans", sans-serif;
    font-size: 11px;
}
button {
    padding: 0;
    border: none;
    background: none;
    font: inherit;
    color: inherit;
}
svg {
    display: block;
    flex: none;
}
.desktop {
    position: relative;
    flex: 1;
    min-height: 0;
}

/* desktop shortcuts */
.shortcuts {
    display: grid;
    grid-template-columns: repeat(8, 80px);
    padding-top: 7px;
}
.shortcut {
    display: flex;
    flex-direction: column;
    align-items: center;
    gap: 2px;
    line-height: 16px;
    color: #fff;
    text-decoration: none;
    white-space: nowrap;
}
.col-1 { grid-column: 1; }
.col-3 { grid-column: 3; }
.col-4 { grid-column: 4; }
.col-5 { grid-column: 5; }
.col-8 { grid-column: 8; }

/* text editor */
.word {
    position: absolute;
    left: 0;
    top: 72px;
    bottom: 20px;
    width: 688px;
    display: flex;
    flex-direction: column;
    background-color: #f8f8f8;
    border-top: 1px solid #8c9494;
    border-bottom: 1px solid #7d8686;
    color: #333;
}
.word-tools {
    display: flex;
    align-items: center;
    height: 31px;
}
.tool {
    width: 22px;
    height: 24px;
    display: flex;
    align-items: center;
    justify-content: center;
}
.caret {
    width: 7px;
    border: solid transparent;
    border-width: 4px 3px 0;
    border-top-color: #222;
}
.caret.wide {
    margin: 0 3px;
}
.letter {
    font: bold 21px/20px "Liberation Serif", serif;
    color: #35588f;
}
.red-line {
    border-bottom: 4px solid #e10707;
    height: 23px;
    width: 16px;
    margin: 0 3px;
}
.tiny-text {
    font: bold 7px "Liberation Sans", sans-serif;
}
.ab-text {
    font: 10px "Liberation Sans", sans-serif;
}
.size-box {
    width: 54px;
    height: 22px;
    margin: 0 1px;
    padding: 0 0 0 3px;
    appearance: none;
    border: 1px solid #ccd0d6;
    border-radius: 0;
    background: linear-gradient(135deg, #666 50%, transparent 50%) 44px 9px / 4px 4px no-repeat #f8f8f8;
    font: inherit;
    font-size: 12px;
    color: #111;
}
.tool-line {
    height: 16px;
    margin: 0 2px 0 6px;
    border-left: 1px solid #777;
}
.more {
    width: 14px;
}
.doc-name {
    width: 62px;
    padding-left: 8px;
    font-size: 12px;
    color: #999;
    white-space: nowrap;
}
.word-min i {
    width: 13px;
    height: 6px;
    border: 1px solid #555;
    border-radius: 2px;
}
.word-tabs {
    display: flex;
    gap: 27px;
    height: 22px;
    padding: 0 0 2px 1px;
    border-bottom: 2px solid #8a8f98;
    white-space: nowrap;
}
.word-body {
    flex: 1;
    min-height: 0;
    display: flex;
    flex-direction: column;
    background: linear-gradient(#c9ced2, #c3c9cb 60%, #8f9b9e);
}
.ruler-nums {
    font-size: 10px;
    text-anchor: middle;
    fill: #444;
    stroke: none;
}
.page {
    flex: 1;
    width: 595px;
    margin: 2px 0 5px 13px;
    padding: 59px 40px 0 85px;
    background-color: #f8f8f8;
    box-shadow: 0 0 8px #666f72;
    font: 14px/16px "Liberation Serif", serif;
    color: #000;
    white-space: nowrap;
}
.page p {
    margin: 0 0 14px;
}
.page a {
    color: #33709f;
    text-decoration: none;
}
.page u {
    text-decoration: underline wavy #e23b3b 1px;
    text-underline-offset: 1px;
    text-decoration-skip-ink: none;
}
.word-status {
    display: flex;
    align-items: center;
    height: 21px;
    margin-bottom: 5px;
    background: linear-gradient(#e3e7e9, #d0d5d8 45%, #b9c0c4 50%, #c5cacd);
    white-space: nowrap;
}
.word-status > span {
    height: 19px;
    display: flex;
    align-items: center;
}
.st-pages {
    width: 34px;
    padding-left: 4px;
    border-right: 1px solid #8f979b;
}
.st-words {
    width: 124px;
    padding-left: 9px;
    border-right: 1px solid #8f979b;
}
.st-lang {
    width: 93px;
    gap: 16px;
    padding-left: 7px;
    border-right: 1px solid #8f979b;
}
.st-views {
    margin-left: 148px;
    padding-left: 4px;
    border-left: 1px solid #8f979b;
}
.st-views button {
    width: 18px;
    height: 19px;
    padding-left: 2px;
}
.st-views .active {
    width: 20px;
    border: 1px solid #c28a20;
    border-radius: 2px;
    background-color: #fbd870;
}
.st-zoom {
    padding: 0 8px 0 10px;
}
.zoom-out {
    width: 15px;
    height: 15px;
    border: 1px solid #777;
    border-radius: 50%;
    background: linear-gradient(#444, #444) center / 7px 2px no-repeat #f4f5f6;
}
.zoom {
    width: 100px;
    height: 19px;
    margin: 0;
    appearance: none;
    background: linear-gradient(#838b90, #838b90) 0 9px / 100% 1px no-repeat, linear-gradient(#838b90, #838b90) 50% 5px / 1px 9px no-repeat;
}
.zoom::-webkit-slider-thumb {
    appearance: none;
    width: 9px;
    height: 12px;
    border: 1px solid #666;
    border-radius: 1px 1px 5px 5px;
    background-color: #f4f5f6;
}

/* accounting window */
.app {
    position: absolute;
    left: 629px;
    right: 167px;
    top: 75px;
    bottom: 0;
    display: flex;
    flex-direction: column;
    padding: 0 7px 5px 5px;
    border: 1px solid #3c4a54;
    border-bottom: none;
    border-radius: 6px 6px 0 0;
    background: linear-gradient(#b4c6d9, #d3deeb 24px, #d5dfee);
}
.app-title {
    display: flex;
    align-items: flex-start;
    gap: 2px;
    height: 23px;
    padding: 6px 1px 0 2px;
}
.app-title h1 {
    flex: 1;
    margin: 0 0 0 1px;
    font-size: 11px;
    font-weight: normal;
    line-height: 16px;
    color: #26323c;
    white-space: nowrap;
}
.app-title button {
    width: 26px;
    height: 14px;
    display: flex;
    align-items: center;
    justify-content: center;
    border: 1px solid #7b8a9b;
    border-radius: 2px;
    background-color: #c9d6e4;
    box-shadow: inset 0 0 0 1px #dfe8f1;
}
.app-menu {
    display: flex;
    align-items: center;
    gap: 14px;
    height: 19px;
    padding-left: 8px;
    background: linear-gradient(#fafbfe, #e9edf7 40%, #d3daec 45%, #e0e5f3);
    border-bottom: 1px solid #a5a8ae;
    color: #5f646c;
    white-space: nowrap;
}
.app-menu > svg {
    margin-right: -5px;
}
.mdi {
    display: flex;
    margin-left: auto;
}
.mdi button {
    width: 18px;
    height: 17px;
    display: flex;
    align-items: center;
    padding-left: 3px;
    border: 1px solid #a5b6cf;
    background-color: #edf2fa;
}
.app-tools {
    display: flex;
    align-items: center;
    height: 32px;
    padding-bottom: 2px;
    background-color: #efefef;
}
.app-tools i {
    height: 22px;
    margin: 0 5px 0 2px;
    border-left: 1px solid #8c8c8c;
}
.app-tools i:first-child {
    margin-left: 0;
}
.app-tools button {
    width: 27px;
    height: 24px;
    display: flex;
    align-items: center;
    justify-content: center;
}
.gray-text {
    font: 8px "Liberation Sans", sans-serif;
    fill: #8c8c8c;
}
.cal-day {
    font: bold 9px "Liberation Sans", sans-serif;
    fill: #e00000;
}
.cal-month {
    font: bold 7px "Liberation Sans", sans-serif;
}
.grid {
    flex: 1;
    min-height: 0;
    display: flex;
    border-top: 2px solid #777;
    border-left: 1px solid #777;
    border-bottom: 1px solid #000;
    background-color: #efefef;
    font-family: "Liberation Sans", sans-serif;
    font-size: 13px;
    color: #000;
}
.grid-main {
    flex: 1;
}
table {
    width: 100%;
    border-collapse: separate;
    border-spacing: 0;
}
th {
    height: 22px;
    padding: 0 0 2px;
    border-bottom: 1px solid #000;
    background-color: #efefef;
    font-weight: normal;
}
td {
    height: 20px;
    padding: 0 0 0 3px;
    border-bottom: 1px solid #000;
    background-color: #f8f8f8;
    line-height: 16px;
}
.mark {
    width: 13px;
    padding: 0;
    border-right: 1px solid #000;
    background-color: #efefef;
    box-shadow: inset -1px -1px #a5a5a5;
}
.pick {
    width: 22px;
    padding: 0 0 0 3px;
    border-right: 1px solid #000;
    background-color: #efefef;
    box-shadow: inset -1px -1px #a5a5a5;
}
.mark i {
    display: block;
    margin-left: 4px;
    border: solid transparent;
    border-width: 4px 0 4px 4px;
    border-left-color: #000;
}
.current td:last-child {
    outline: 1px dotted #000;
    outline-offset: -1px;
}
.scroll {
    width: 16px;
    display: flex;
    flex-direction: column;
    align-items: center;
    justify-content: space-between;
    padding: 6px 0;
    background: linear-gradient(90deg, #e4e4e4, #f2f2f2);
}
.up, .down {
    border: solid transparent;
    border-width: 0 4px 4px;
    border-bottom-color: #888;
}
.down {
    border-width: 4px 4px 0;
    border-top-color: #888;
}
.grid-status {
    display: flex;
    gap: 2px;
    height: 20px;
    padding: 2px 4px 2px 2px;
    border: 1px solid #999;
    border-top: none;
    background-color: #efefef;
    font: bold 12px/14px "Liberation Sans", sans-serif;
}
.grid-status span {
    padding-left: 1px;
    border-top: 1px solid #999;
    border-left: 1px solid #999;
    border-right: 1px solid #fff;
}
.count {
    width: 77px;
}
.folder {
    flex: 1;
}
.app-status {
    display: flex;
    justify-content: flex-end;
    gap: 2px;
    height: 19px;
    padding-top: 3px;
    background-color: #efefef;
    font: bold 12px/14px "Liberation Sans", sans-serif;
}
.app-status span {
    padding: 0 2px 0 1px;
    border: 1px solid #999;
    border-color: #999 #fff #fff #999;
}
.period {
    width: 222px;
}
.base {
    width: 88px;
}

/* taskbar */
.taskbar {
    position: relative;
    display: flex;
    height: 30px;
    border-top: 1px solid #2f4658;
    background: linear-gradient(90deg, #7e90aa 120px, #a0bfd8 170px, #a0bfd8 calc(100% - 280px), #8095b3 calc(100% - 240px), #7c8eaa);
    box-shadow: inset 0 1px #c4d8e8;
}
.start {
    position: absolute;
    left: 0;
    bottom: 0;
    width: 54px;
    height: 44px;
    background-color: #000;
}
.quick {
    display: flex;
    align-items: center;
    gap: 21px;
    width: 125px;
    padding-left: 70px;
}
.grip {
    width: 8px;
    height: 22px;
    background: radial-gradient(#35465c 1px, transparent 1px) 0 0 / 3px 4px;
}
.tasks {
    display: flex;
    flex: 1;
}
.tasks button {
    width: 44px;
    height: 29px;
    margin: 0 1px;
    display: flex;
    align-items: center;
    justify-content: center;
}
.tasks .open {
    border: 1px solid #3f5871;
    border-radius: 3px;
    background: linear-gradient(135deg, #dce5f2, #b4c7e0 50%, #a3bbdb);
    box-shadow: inset 0 0 0 1px #dbe6f2;
}
.tasks .many {
    padding-right: 6px;
    background: linear-gradient(90deg, transparent 36px, #3f5871 36px, #3f5871 37px, #c3d4e8 37px), linear-gradient(135deg, #dce5f2, #b4c7e0 50%, #a3bbdb);
}
.ya-text {
    font: bold 13px "Liberation Serif", serif;
    fill: #e02222;
}
.disk-text {
    font: bold 8px "Liberation Sans", sans-serif;
}
.tray {
    display: flex;
    align-items: center;
    gap: 8px;
    width: 231px;
    font-size: 12px;
    color: #fff;
}
.lang {
    width: 24px;
    padding-bottom: 4px;
}
.tray-up {
    margin-right: 4px;
}
.tray time {
    width: 47px;
    text-align: right;
}
.peek {
    width: 14px;
    height: 29px;
    margin-left: auto;
    border: 1px solid #4c5a6c;
    background: linear-gradient(135deg, #a4b0c0, #68788c);
}
```
